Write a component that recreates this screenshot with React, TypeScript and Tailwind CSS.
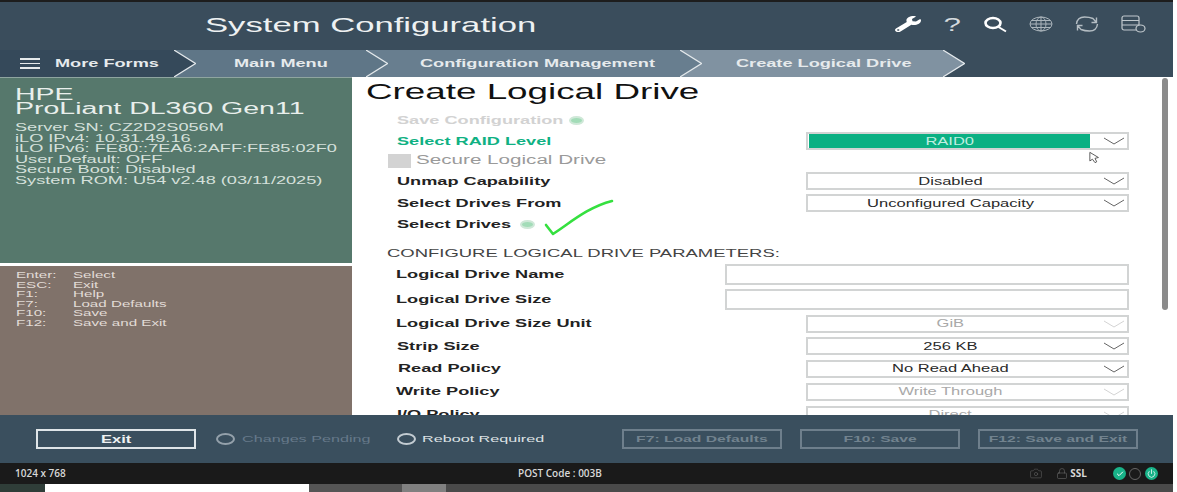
import type { ReactNode } from 'react'
import { Camera, Lock, Check, Power } from 'lucide-react'
import { FaWrench } from 'react-icons/fa'

const crumbs = [
  { label: 'Main Menu', width: 'w-[214px]', bg: 'bg-[#5f7687]', pad: 'pl-[60px]', z: 'z-30' },
  { label: 'Configuration Management', width: 'w-[336px]', bg: 'bg-[#687e8f]', pad: 'pl-[54px]', z: 'z-20' },
  { label: 'Create Logical Drive', width: 'w-[285px]', bg: 'bg-[#8092a1]', pad: 'pl-[56px]', z: 'z-10' },
]

const help = [
  ['Enter:', 'Select'],
  ['ESC:', 'Exit'],
  ['F1:', 'Help'],
  ['F7:', 'Load Defaults'],
  ['F10:', 'Save'],
  ['F12:', 'Save and Exit'],
]

// the console picture is stretched sideways, so text is too
function Wide({ children, className = '' }: { children: ReactNode; className?: string }) {
  return <span className={`inline-block origin-left scale-x-[1.65] whitespace-nowrap ${className}`}>{children}</span>
}

function WideCenter({ children, className = '' }: { children: ReactNode; className?: string }) {
  return <span className={`inline-block origin-center scale-x-[1.65] whitespace-nowrap ${className}`}>{children}</span>
}

function Crumb({ label, width, bg, pad, z }: { label: string; width: string; bg: string; pad: string; z: string }) {
  return (
    <div className={`relative -ml-[22px] h-full ${width} ${z}`}>
      <div className={`flex h-full items-center ${bg} ${pad} [clip-path:polygon(0_0,calc(100%-22px)_0,100%_50%,calc(100%-22px)_100%,0_100%)]`}>
        <Wide>{label}</Wide>
      </div>
      <ArrowLine />
    </div>
  )
}

function ArrowLine() {
  return (
    <svg viewBox="0 0 22 27" preserveAspectRatio="none" className="absolute right-0 top-0 h-full w-[22px]" fill="none" stroke="#e4e9ec" strokeWidth="1.2">
      <path d="M0 0 L21.5 13.5 L0 27" />
    </svg>
  )
}

function Caret({ muted }: { muted?: boolean }) {
  return (
    <svg viewBox="0 0 22 8" className="mr-[2px] h-[8px] w-[22px] shrink-0" fill="none" stroke={muted ? '#d4d4d4' : '#666666'} strokeWidth="1">
      <path d="M1 1 L11 7 L21 1" />
    </svg>
  )
}

function Select({ value, muted }: { value: string; muted?: boolean }) {
  return (
    <div className="ml-auto flex h-[18px] w-[323px] items-center border-2 border-[#d2d4d4] bg-white">
      <span className={`flex-1 pr-[10px] text-center text-[10px] ${muted ? 'text-[#a9a9a9]' : 'text-[#2a2a2a]'}`}>
        <WideCenter>{value}</WideCenter>
      </span>
      <Caret muted={muted} />
    </div>
  )
}

function Row({ label, rowH, pad, labelColor = 'text-[#222222]', children }: { label: string; rowH: string; pad: string; labelColor?: string; children?: ReactNode }) {
  return (
    <div className={`flex ${rowH} items-center`}>
      <span className={`${pad} w-max text-[11px] font-bold ${labelColor}`}>
        <Wide>{label}</Wide>
      </span>
      {children}
    </div>
  )
}

function FooterBtn({ label }: { label: string }) {
  return (
    <div className="flex h-[20px] w-[160px] items-center justify-center border-2 border-[#6e7f8c] text-[9.5px] font-bold text-[#72838f]">
      <WideCenter>{label}</WideCenter>
    </div>
  )
}

export default function App() {
  return (
    <div className='relative flex h-[492px] w-[1177px] flex-col overflow-hidden bg-white font-["Liberation_Sans",Arial,sans-serif]'>
      <div className="h-[2px] w-[1173px] bg-[#1d1d1d]" />

      {/* Title bar */}
      <div className="flex h-[48px] w-[1173px] items-center bg-[#3a4d5c] pb-[4px] pl-[205px]">
        <h1 className="text-[21px] leading-none text-[#eef1f2]">
          <Wide>System Configuration</Wide>
        </h1>
        <div className="ml-auto flex items-center gap-[22px] pr-[27px] text-[#d5dbdf]">
          <FaWrench className="h-[16px] w-[26px] text-white" preserveAspectRatio="none" />
          <span className="w-[18px] text-center text-[19px] leading-none">
            <WideCenter>?</WideCenter>
          </span>
          <svg viewBox="0 0 24 18" className="h-[18px] w-[24px]" fill="none" stroke="#ffffff" strokeWidth="2.6">
            <ellipse cx="10" cy="8" rx="7.5" ry="5" />
            <path d="M15.5 12 L23 16.5" strokeWidth="2" />
          </svg>
          <svg viewBox="0 0 24 18" className="h-[18px] w-[24px]" fill="none" stroke="#aab4bb" strokeWidth="1">
            <ellipse cx="12" cy="9" rx="11" ry="7" />
            <ellipse cx="12" cy="9" rx="5" ry="7" />
            <path d="M1 9 H23 M2.5 5.5 H21.5 M2.5 12.5 H21.5 M12 2 V16" />
          </svg>
          <svg viewBox="0 0 24 18" className="h-[18px] w-[24px]" fill="none" stroke="#b4bdc3" strokeWidth="1.4">
            <path d="M1.5 9 C2 4.5 5 2 9.5 2 C13 2 15.5 2.5 18 3.5 L21.5 7.5 M21.5 2.5 V7.5 H16.5" />
            <path d="M22.5 9 C22 13.5 19 16 14.5 16 C11 16 8.5 15.5 6 14.5 L2.5 10.5 M2.5 15.5 V10.5 H7.5" />
          </svg>
          <svg viewBox="0 0 25 18" className="h-[18px] w-[25px]" fill="none" stroke="#c0c8cd" strokeWidth="1.2">
            <rect x="1" y="1" width="17" height="14" rx="2" />
            <path d="M1 5.5 H18 M1 10 H18" />
            <ellipse cx="19.5" cy="13.5" rx="4.5" ry="3.5" fill="#3a4d5c" />
          </svg>
        </div>
      </div>

      {/* Breadcrumb */}
      <div className="flex h-[27px] w-[1173px] items-center bg-[#3a4d5c] text-[11px] font-bold text-[#e6eaec]">
        <div className="relative z-40 h-full w-[196px]">
          <div className="flex h-full items-center bg-[#35495a] pl-[20px] [clip-path:polygon(0_0,calc(100%-22px)_0,100%_50%,calc(100%-22px)_100%,0_100%)]">
            <span className="flex w-[20px] flex-col gap-[3px]">
              <span className="h-[1.5px] bg-[#e6eaec]" />
              <span className="h-[1.5px] bg-[#e6eaec]" />
              <span className="h-[1.5px] bg-[#e6eaec]" />
            </span>
            <span className="ml-[15px]">
              <Wide>More Forms</Wide>
            </span>
          </div>
          <ArrowLine />
        </div>
        {crumbs.map((crumb) => (
          <Crumb key={crumb.label} {...crumb} />
        ))}
      </div>

      <div className="flex h-[338px] w-[1173px] overflow-hidden">
        {/* Sidebar */}
        <aside className="flex w-[352px] shrink-0 flex-col border-t border-[#8fa5a0]">
          <div className="h-[185px] bg-[#56786c] pl-[15px] pt-[9px] text-[#e9efec]">
            <div className="text-[17.3px] leading-[14px]">
              <Wide>HPE</Wide>
            </div>
            <div className="text-[17.3px] leading-[14px]">
              <Wide>ProLiant DL360 Gen11</Wide>
            </div>
            <div className="mt-[7px] text-[11px] leading-[10.6px] text-[#d5e0db]">
              <div><Wide>Server SN: CZ2D2S056M</Wide></div>
              <div><Wide>iLO IPv4: 10.31.49.16</Wide></div>
              <div><Wide>iLO IPv6: FE80::7EA6:2AFF:FE85:02F0</Wide></div>
              <div><Wide>User Default: OFF</Wide></div>
              <div><Wide>Secure Boot: Disabled</Wide></div>
              <div><Wide>System ROM: U54 v2.48 (03/11/2025)</Wide></div>
            </div>
          </div>
          <div className="mt-[3px] flex-1 bg-[#80726a] pl-[16px] pt-[5px] text-[9.2px] leading-[9.6px] text-[#e2dcd7]">
            {help.map(([key, action]) => (
              <div key={key} className="flex">
                <span className="w-[57px]"><Wide>{key}</Wide></span>
                <Wide>{action}</Wide>
              </div>
            ))}
          </div>
        </aside>

        {/* Form */}
        <main className="relative flex-1 overflow-hidden pr-[44px]">
          <h2 className="h-[33px] pl-[14px] pt-[1px] text-[22.3px] leading-[28px] text-[#111111]">
            <Wide>Create Logical Drive</Wide>
          </h2>
          <Row label="Save Configuration" rowH="h-[21px]" pad="pl-[45px]" labelColor="text-[#d2d2d2]">
            <span className="ml-[71px] inline-block h-[9px] w-[15px] rounded-[50%] border-2 border-[#cfe8d8] bg-[#a3dcb8]" />
          </Row>
          <div className="flex h-[20px] items-center">
            <span className="pl-[45px] text-[11px] font-bold text-[#10b183]">
              <Wide>Select RAID Level</Wide>
            </span>
            <div className="ml-auto flex h-[18px] w-[323px] items-center border-2 border-[#d2d4d4] bg-white pl-[1px]">
              <div className="flex h-full w-[281px] items-center justify-center bg-[#0bb083] text-[10px] text-[#bfeee0]">
                <WideCenter>RAID0</WideCenter>
              </div>
              <span className="ml-auto">
                <Caret />
              </span>
            </div>
          </div>
          <div className="flex h-[19px] items-center pl-[36px]">
            <span className="h-[14px] w-[23px] bg-[#d3d3d3]" />
            <span className="ml-[5px] text-[12.5px] text-[#9a9a9a]">
              <Wide>Secure Logical Drive</Wide>
            </span>
          </div>
          <Row label="Unmap Capability" rowH="h-[22px]" pad="pl-[45px]">
            <Select value="Disabled" />
          </Row>
          <Row label="Select Drives From" rowH="h-[22px]" pad="pl-[45px]">
            <Select value="Unconfigured Capacity" />
          </Row>
          <Row label="Select Drives" rowH="h-[21px]" pad="pl-[45px]">
            <span className="ml-[54px] inline-block h-[9px] w-[15px] rounded-[50%] border-2 border-[#cfe8d8] bg-[#a3dcb8]" />
          </Row>
          <div className="flex h-[28px] items-end pb-[1px] pl-[35px] text-[11.2px] text-[#444444]">
            <Wide>CONFIGURE LOGICAL DRIVE PARAMETERS:</Wide>
          </div>
          <Row label="Logical Drive Name" rowH="h-[23px]" pad="pl-[44px]">
            <div className="ml-auto h-[21px] w-[404px] border-2 border-[#d2d4d4]" />
          </Row>
          <Row label="Logical Drive Size" rowH="h-[26px]" pad="pl-[44px]">
            <div className="ml-auto h-[21px] w-[404px] border-2 border-[#d2d4d4]" />
          </Row>
          <Row label="Logical Drive Size Unit" rowH="h-[23px]" pad="pl-[44px]">
            <Select value="GiB" muted />
          </Row>
          <Row label="Strip Size" rowH="h-[22px]" pad="pl-[45px]">
            <Select value="256 KB" />
          </Row>
          <Row label="Read Policy" rowH="h-[23px]" pad="pl-[46px]">
            <Select value="No Read Ahead" />
          </Row>
          <Row label="Write Policy" rowH="h-[23px]" pad="pl-[44px]">
            <Select value="Write Through" muted />
          </Row>
          <Row label="I/O Policy" rowH="h-[23px]" pad="pl-[45px]">
            <Select value="Direct" muted />
          </Row>

          {/* Green tick drawn over the form */}
          <svg viewBox="0 0 70 40" className="absolute left-[192px] top-[120px] h-[40px] w-[70px]" fill="none" stroke="#35e03f" strokeWidth="2.6" strokeLinecap="round" strokeLinejoin="round">
            <path d="M2 28 L9 37 C26 26 44 10 68 4" />
          </svg>
          {/* Mouse pointer */}
          <svg viewBox="0 0 14 14" className="absolute left-[737px] top-[74px] h-[13px] w-[12px]" fill="#ffffff" stroke="#444444" strokeWidth="1">
            <path d="M1 1 L1 11 L4 9 L7 13 L9 12 L7 8 L11 7 Z" />
          </svg>
          {/* Scrollbar thumb */}
          <div className="absolute right-[5px] top-[1px] h-[232px] w-[6px] rounded-full bg-[#8b8b8b]" />
        </main>
      </div>

      {/* Action bar */}
      <div className="flex h-[48px] w-[1173px] items-center bg-[#3a4f5e] pl-[36px] pr-[35px]">
        <div className="flex h-[20px] w-[160px] items-center justify-center border-2 border-[#dfe5e8] text-[10px] font-bold text-[#eef1f2]">
          <WideCenter>Exit</WideCenter>
        </div>
        <span className="ml-[20px] h-[12px] w-[19px] rounded-[50%] border-2 border-[#94a1ab]" />
        <span className="ml-[7px] w-[155px] text-[9.8px] text-[#66798a]">
          <Wide>Changes Pending</Wide>
        </span>
        <span className="h-[12px] w-[19px] rounded-[50%] border-2 border-[#c3ccd2]" />
        <span className="ml-[6px] text-[9.8px] text-[#dde2e5]">
          <Wide>Reboot Required</Wide>
        </span>
        <div className="ml-auto flex gap-[18px]">
          <FooterBtn label="F7: Load Defaults" />
          <FooterBtn label="F10: Save" />
          <FooterBtn label="F12: Save and Exit" />
        </div>
      </div>

      {/* Remote console status bar */}
      <div className='flex h-[21px] w-[1173px] items-center bg-[#1a1a1a] pl-[15px] pr-[15px] font-["Open_Sans",sans-serif] text-[10px] font-semibold text-[#d8d8d8]'>
        <span className="w-[503px]">1024 x 768</span>
        <span>POST Code : 003B</span>
        <div className="ml-auto flex items-center">
          <Camera className="h-[13px] w-[14px] text-[#666666]" strokeWidth={1} />
          <Lock className="ml-[13px] h-[15px] w-[12px] text-[#777777]" strokeWidth={1} />
          <span className="ml-[2px] font-bold">SSL</span>
          <span className="ml-[26px] flex h-[13px] w-[13px] items-center justify-center rounded-full bg-[#19b389]">
            <Check className="h-[8px] w-[8px] text-white" strokeWidth={3} />
          </span>
          <span className="ml-[3px] h-[12px] w-[12px] rounded-full border border-[#666666]" />
          <span className="ml-[4px] flex h-[13px] w-[13px] items-center justify-center rounded-full bg-[#19b389]">
            <Power className="h-[9px] w-[9px] text-white" strokeWidth={2} />
          </span>
        </div>
      </div>

      {/* Window strip at the bottom edge */}
      <div className="flex h-[8px] w-[1173px]">
        <div className="w-[45px] bg-[#2f3d38]" />
        <div className="w-[264px] bg-white" />
        <div className="w-[93px] bg-[#555555]" />
        <div className="w-[44px] bg-[#808080]" />
        <div className="flex-1 bg-[#4a4a4a]" />
      </div>
    </div>
  )
}
